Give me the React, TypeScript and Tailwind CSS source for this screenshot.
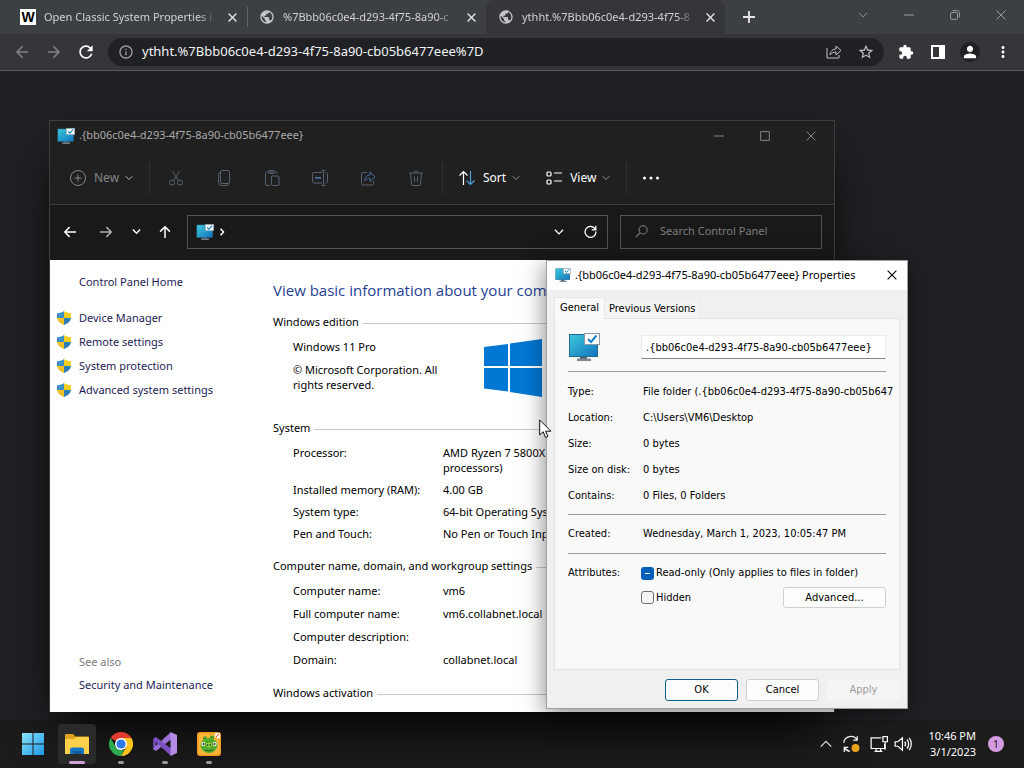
import type { ReactNode } from 'react'
import {
  MdArrowBack,
  MdArrowForward,
  MdExtension,
  MdInfoOutline,
  MdMoreVert,
  MdPerson,
  MdPublic,
  MdRefresh,
  MdStarBorder,
} from 'react-icons/md'

const folderName = '.{bb06c0e4-d293-4f75-8a90-cb05b6477eee}'

const tabs = [
  { title: 'Open Classic System Properties i', favicon: 'w', active: false },
  { title: '%7Bbb06c0e4-d293-4f75-8a90-c', favicon: 'globe', active: false },
  { title: 'ythht.%7Bbb06c0e4-d293-4f75-8', favicon: 'globe', active: true },
]

const sideLinks = ['Device Manager', 'Remote settings', 'System protection', 'Advanced system settings']

const systemRows = [
  { label: 'Processor:', value: <>AMD Ryzen 7 5800X<br />processors)</> },
  { label: 'Installed memory (RAM):', value: '4.00 GB' },
  { label: 'System type:', value: '64-bit Operating System' },
  { label: 'Pen and Touch:', value: 'No Pen or Touch Input' },
]

const nameRows = [
  { label: 'Computer name:', value: 'vm6' },
  { label: 'Full computer name:', value: 'vm6.collabnet.local' },
  { label: 'Computer description:', value: '' },
  { label: 'Domain:', value: 'collabnet.local' },
]

const propertyRows = [
  { label: 'Type:', value: 'File folder (.{bb06c0e4-d293-4f75-8a90-cb05b647' },
  { label: 'Location:', value: 'C:\\Users\\VM6\\Desktop' },
  { label: 'Size:', value: '0 bytes' },
  { label: 'Size on disk:', value: '0 bytes' },
  { label: 'Contains:', value: '0 Files, 0 Folders' },
]

function Stroke({ size = 16, width = 1, className = '', children }: { size?: number; width?: number; className?: string; children: ReactNode }) {
  return (
    <svg width={size} height={size} viewBox="0 0 16 16" fill="none" stroke="currentColor" strokeWidth={width} className={`shrink-0 ${className}`} aria-hidden="true">
      {children}
    </svg>
  )
}

function Chevron({ size = 8, width = 2, className = '' }: { size?: number; width?: number; className?: string }) {
  return (
    <Stroke size={size} width={width} className={className}>
      <path d="M1.5 4.5 8 11l6.5-6.5" />
    </Stroke>
  )
}

function Cross({ size = 10, width = 1.5 }: { size?: number; width?: number }) {
  return (
    <Stroke size={size} width={width}>
      <path d="m1 1 14 14M15 1 1 15" />
    </Stroke>
  )
}

function MonitorIcon({ size }: { size: number }) {
  return (
    <svg width={size} height={size} viewBox="0 0 32 32" className="shrink-0" aria-hidden="true">
      <defs>
        <linearGradient id="screen" x1="0" y1="0" x2="1" y2="1">
          <stop offset="0" stopColor="#3ccbdc" />
          <stop offset="1" stopColor="#1172bd" />
        </linearGradient>
      </defs>
      <path d="M12 25h7v3h-7z" fill="#55616b" />
      <path d="M9 27.5h14V30H9z" fill="#7b8790" />
      <rect x="1.5" y="3.5" width="28" height="22" fill="url(#screen)" stroke="#246a8e" />
      <rect x="16.5" y="2.5" width="15" height="11" fill="#fff" stroke="#8b9aa5" />
      <path d="m20 8 3 3 5.500-6.500" fill="none" stroke="#1481c9" strokeWidth="2" />
    </svg>
  )
}

function ShieldIcon() {
  return (
    <svg width="14" height="14" viewBox="0 0 16 16" className="shrink-0" aria-hidden="true">
      <path d="M8 0C6 1.600 3.500 2.300 0 2.300V8h8z" fill="#3a93c4" />
      <path d="M8 0c2 1.600 4.500 2.300 8 2.300V8H8z" fill="#f3cf1e" />
      <path d="M0 8c.4 3.800 3.500 6.500 8 8V8z" fill="#efc02a" />
      <path d="M16 8c-.4 3.800-3.500 6.500-8 8V8z" fill="#2f7fb5" />
    </svg>
  )
}

function TabItem({ title, favicon, active, divided }: { title: string; favicon: string; active: boolean; divided: boolean }) {
  return (
    <div className={`flex h-[34px] w-[239px] min-w-0 items-center rounded-t-lg ${active ? 'bg-[#35363a]' : 'bg-[#3c4043]'}`}>
      <span className={`h-5 w-px ${divided ? 'bg-[#606468]' : ''}`} />
      <div className="flex min-w-0 flex-1 items-center gap-2 pr-[7px] pl-[11px]">
        {favicon === 'w' ? (
          <span className="flex size-4 shrink-0 items-center justify-center bg-white font-[Liberation_Sans] text-sm font-bold text-black">W</span>
        ) : (
          <MdPublic className="size-4 shrink-0 text-[#c3c6c9]" />
        )}
        <span className="min-w-0 flex-1 overflow-hidden mask-r-from-90% text-[11px] whitespace-nowrap text-[#d0d2d5]">{title}</span>
        <button type="button" aria-label="Close tab" className="flex size-4 shrink-0 items-center justify-center text-[#e0e2e5]">
          <Cross size={9} width={2.5} />
        </button>
      </div>
    </div>
  )
}

function BrowserChrome() {
  return (
    <header className="border-b border-[#5a5b5e] bg-[#35363a] text-[#9aa0a6]">
      <div className="flex h-[34px] items-center bg-[#3c4043]">
        <div className="flex min-w-0 items-center pl-2">
          {tabs.map((tab, i) => (
            <TabItem key={tab.title} {...tab} divided={i === 1} />
          ))}
        </div>
        <button type="button" aria-label="New tab" className="ml-4 flex size-4 items-center justify-center text-[#e3e5e8]">
          <Stroke size={12} width={2.5}><path d="M8 0v16M0 8h16" /></Stroke>
        </button>
        <div className="ml-auto flex items-center gap-9 pr-[18px] pb-1">
          <button type="button" aria-label="Search tabs"><Chevron size={10} width={1.5} /></button>
          <button type="button" aria-label="Minimize"><Stroke size={10} width={1.5}><path d="M0 8h16" /></Stroke></button>
          <button type="button" aria-label="Restore">
            <Stroke size={10} width={1.5}>
              <rect x="1" y="4" width="11" height="11" rx="2" />
              <path d="M4 1h8a3 3 0 0 1 3 3v8" />
            </Stroke>
          </button>
          <button type="button" aria-label="Close"><Cross size={10} width={1.5} /></button>
        </div>
      </div>
      <div className="flex h-9 items-center gap-4 pr-3 pl-3.5">
        <button type="button" aria-label="Back"><MdArrowBack className="size-4 scale-115 text-[#7d8186]" /></button>
        <button type="button" aria-label="Forward"><MdArrowForward className="size-4 scale-115 text-[#7d8186]" /></button>
        <button type="button" aria-label="Reload"><MdRefresh className="-ml-0.5 size-5 text-white" /></button>
        <div className="-ml-1 flex h-7 flex-1 items-center gap-2 rounded-full bg-[#202124] pr-2.5 pl-2.5">
          <MdInfoOutline className="size-4 shrink-0 text-[#9aa0a6]" />
          <input aria-label="Address" defaultValue="ythht.%7Bbb06c0e4-d293-4f75-8a90-cb05b6477eee%7D" className="min-w-0 flex-1 bg-transparent text-[13px] text-[#f1f3f4] outline-none" />
          <button type="button" aria-label="Share" className="mr-2 text-[#bdc1c6]">
            <Stroke>
              <path d="M1 4v10h12v-3" />
              <path d="M4 11c.5-4 3-6 6-6V2l5 4.500-5 4.500V8C7.500 8 5.500 9 4 11z" />
            </Stroke>
          </button>
          <button type="button" aria-label="Bookmark" className="text-[#bdc1c6]"><MdStarBorder className="size-4 scale-110" /></button>
        </div>
        <button type="button" aria-label="Extensions" className="-ml-0.5"><MdExtension className="size-4 text-white" /></button>
        <button type="button" aria-label="Side panel">
          <svg width="16" height="16" viewBox="0 0 16 16" aria-hidden="true">
            <path d="M1 1h14v14H1zM3 3v10h6V3z" fill="#fff" fillRule="evenodd" />
          </svg>
        </button>
        <button type="button" aria-label="Profile" className="-mx-0.5 flex size-5 items-center justify-center rounded-full bg-[#202124]">
          <MdPerson className="size-4 scale-115 text-white" />
        </button>
        <button type="button" aria-label="Menu"><MdMoreVert className="size-[18px] text-white" /></button>
      </div>
    </header>
  )
}

const disabledTools: { name: string; icon: ReactNode }[] = [
  { name: 'Cut', icon: <><path d="m4.500 1 6 10M11.500 1l-6 10" /><circle cx="4" cy="12.500" r="2.500" /><circle cx="12" cy="12.500" r="2.500" /></> },
  { name: 'Copy', icon: <><rect x="4.500" y=".5" width="9" height="13" rx="1.500" /><path d="M4.500 2.500a2 2 0 0 0-2 2v8a3 3 0 0 0 3 3h5a2 2 0 0 0 2-2" /></> },
  { name: 'Paste', icon: <><path d="M6 15.500H3a1.500 1.500 0 0 1-1.500-1.500V3.500A1.500 1.500 0 0 1 3 2h9a1.500 1.500 0 0 1 1.500 1.500" /><rect x="4.500" y=".5" width="6" height="3" rx="1" /><rect x="7.500" y="6" width="7.500" height="9.500" rx="1" /></> },
  { name: 'Rename', icon: <><path d="M10 2.500H2A1.500 1.500 0 0 0 .5 4v7.500A1.500 1.500 0 0 0 2 13h8M13.500 2.500A1.500 1.500 0 0 1 15.500 4v7.500a1.500 1.500 0 0 1-2 1.500M11.500.5v15M9.500.5h4M9.500 15.500h4" /><path d="M3 7.800h6" stroke="#4a7fb5" strokeWidth="1.500" /></> },
  { name: 'Share', icon: <><path d="M7 2.500H3A1.500 1.500 0 0 0 1.500 4v9.500A1.500 1.500 0 0 0 3 15h9a1.500 1.500 0 0 0 1.500-1.500V11" /><path d="M4.500 11C5 7 7 5 10 5V2l5 5-5 4.500V8.500c-2.500 0-4 .5-5.500 2.500z" stroke="#456a94" /></> },
  { name: 'Delete', icon: <path d="M1 3h14M6 3a2 2 0 0 1 4 0M2.500 3l1 11a1.500 1.500 0 0 0 1.500 1.500h6a1.500 1.500 0 0 0 1.500-1.500l1-11M6.500 6.500v5.500M9.500 6.500v5.500" /> },
]

function GroupTitle({ children }: { children: ReactNode }) {
  return (
    <div className="flex items-center gap-1">
      <h2 className="whitespace-nowrap">{children}</h2>
      <span className="mt-1 h-px flex-1 bg-[#c8c8c8]" />
    </div>
  )
}

function InfoRows({ rows }: { rows: { label: string; value: ReactNode }[] }) {
  return (
    <>
      {rows.map((row) => (
        <div key={row.label} className="flex pl-5">
          <dt className="w-[150px] shrink-0">{row.label}</dt>
          <dd className="whitespace-nowrap">{row.value}</dd>
        </div>
      ))}
    </>
  )
}

function ExplorerWindow() {
  return (
    <section className="absolute top-[49px] left-[49px] flex w-[786px] flex-col border border-[#3d3d3d] bg-[#202020] text-[11px] text-white shadow-2xl shadow-black">
      <div className="flex h-7 items-center pt-px pr-[18px] pl-[7px] text-[#a9a9a9]">
        <MonitorIcon size={18} />
        <span className="ml-1">{folderName}</span>
        <div className="ml-auto flex items-center gap-9 text-[#8f8f8f]">
          <button type="button" aria-label="Minimize"><Stroke size={10} width={1.5}><path d="M0 8h16" /></Stroke></button>
          <button type="button" aria-label="Maximize"><Stroke size={10} width={1.5}><path d="M1 1h14v14H1z" /></Stroke></button>
          <button type="button" aria-label="Close"><Cross size={10} width={1.5} /></button>
        </div>
      </div>

      <div className="flex h-14 items-center border-b border-[#3d3d3d] pt-[3px] pl-5 text-xs">
        <button type="button" className="flex w-[79px] items-center text-[#858585]">
          <Stroke><circle cx="8" cy="8" r="7.500" /><path d="M8 4.500v7M4.500 8h7" /></Stroke>
          <span className="mr-1.5 ml-2">New</span>
          <Chevron className="text-[#b5b5b5]" />
        </button>
        <span className="h-8 w-px bg-[#333]" />
        <div className="flex gap-8 px-[18px] text-[#566270]">
          {disabledTools.map((tool) => (
            <button key={tool.name} type="button" disabled aria-label={tool.name}><Stroke>{tool.icon}</Stroke></button>
          ))}
        </div>
        <span className="h-8 w-px bg-[#333]" />
        <button type="button" className="ml-4 flex items-center">
          <Stroke width={1.2}>
            <path d="M4.500 15V1.500M.5 5.500l4-4 4 4" />
            <path d="M11.500 1v13.500M7.500 10.500l4 4 4-4" stroke="#4ba0dc" />
          </Stroke>
          <span className="mr-1.5 ml-2">Sort</span>
          <Chevron width={1.5} className="text-[#b5b5b5]" />
        </button>
        <button type="button" className="ml-[26px] flex items-center">
          <Stroke width={1.2}><rect x="1" y="2" width="4" height="4" rx="1" /><rect x="1" y="10" width="4" height="4" rx="1" /><path d="M8 3h8M8 11h8" /></Stroke>
          <span className="mr-1.5 ml-2">View</span>
          <Chevron width={1.5} className="text-[#b5b5b5]" />
        </button>
        <span className="ml-4 h-8 w-px bg-[#333]" />
        <button type="button" aria-label="More" className="ml-4">
          <svg width="16" height="16" viewBox="0 0 16 16" fill="#fff" aria-hidden="true"><circle cx="1.500" cy="8" r="1.500" /><circle cx="8" cy="8" r="1.500" /><circle cx="14.500" cy="8" r="1.500" /></svg>
        </button>
      </div>

      <div className="flex h-[55px] items-center bg-[#191919] pr-3 pb-0.5 pl-3.5">
        <button type="button" aria-label="Back"><Stroke size={12} width={2}><path d="M16 8H1M7.500 1.500 1 8l6.500 6.500" /></Stroke></button>
        <button type="button" aria-label="Forward" className="ml-6 text-[#b0b0b0]"><Stroke size={12} width={2}><path d="M0 8h15M8.500 1.500 15 8l-6.500 6.500" /></Stroke></button>
        <button type="button" aria-label="Recent locations" className="ml-5"><Chevron size={9} width={2.5} /></button>
        <button type="button" aria-label="Up" className="ml-[18px]"><Stroke size={12} width={2}><path d="M8 16V1M1.500 7.500 8 1l6.500 6.500" /></Stroke></button>
        <div className="ml-4 flex h-[34px] flex-1 items-center border border-[#535353] px-2">
          <MonitorIcon size={18} />
          <Stroke size={8} width={3} className="ml-1"><path d="m5 1.500 6 6.500-6 6.500" /></Stroke>
          <button type="button" aria-label="Previous locations" className="ml-auto"><Chevron size={10} width={2} /></button>
          <button type="button" aria-label="Refresh" className="mr-0.5 ml-5">
            <Stroke size={13} width={1.6}><path d="M14 5.500A6.700 6.700 0 1 0 14.700 8M14.500 1v5h-5" /></Stroke>
          </button>
        </div>
        <label className="ml-3 flex h-[34px] w-[202px] items-center gap-3 border border-[#535353] px-3.5 text-[#7d7d7d]">
          <Stroke size={13} width={1.3}><circle cx="10" cy="6" r="5" /><path d="M6.500 9.500 1 15" /></Stroke>
          <input aria-label="Search" placeholder="Search Control Panel" className="w-full bg-transparent outline-none placeholder:text-[#7d7d7d]" />
        </label>
      </div>

      <div className="-mb-px flex h-[452px] overflow-hidden bg-white leading-[15px] text-black">
        <nav className="flex w-[223px] shrink-0 flex-col pt-3.5 pb-5 pl-[7px] text-[#1d1d55]">
          <a href="#home" className="pl-[22px]">Control Panel Home</a>
          <ul className="mt-[21px] flex flex-col gap-[9px]">
            {sideLinks.map((link) => (
              <li key={link}>
                <a href="#settings" className="flex items-center gap-2"><ShieldIcon />{link}</a>
              </li>
            ))}
          </ul>
          <div className="mt-auto pl-[22px]">
            <p className="text-[#7b7b7b]">See also</p>
            <a href="#security" className="mt-2 block">Security and Maintenance</a>
          </div>
        </nav>
        <main className="min-w-0 flex-1 pt-5">
          <h1 className="font-['Open_Sans',sans-serif] text-[15px] leading-5 text-[#1f3f94]">View basic information about your computer</h1>
          <div className="mt-3.5"><GroupTitle>Windows edition</GroupTitle></div>
          <div className="mt-2.5 flex pl-5">
            <div className="w-[191px]">
              <p>Windows 11 Pro</p>
              <p className="mt-2 max-w-[165px]">© Microsoft Corporation. All rights reserved.</p>
            </div>
            <svg width="58" height="58" viewBox="0 0 58 58" fill="#0078d4" aria-label="Windows">
              <path d="M0 8 24 5v22H0zM26 4.500 58 0v27H26zM0 29h24v23.500L0 49.500zM26 29h32v29l-32-5z" />
            </svg>
          </div>
          <div className="mt-[23px]"><GroupTitle>System</GroupTitle></div>
          <dl className="mt-2.5 flex flex-col gap-[7px]"><InfoRows rows={systemRows} /></dl>
          <div className="mt-[17px]"><GroupTitle>Computer name, domain, and workgroup settings</GroupTitle></div>
          <dl className="mt-2.5 flex flex-col gap-2"><InfoRows rows={nameRows} /></dl>
          <div className="mt-[18px]"><GroupTitle>Windows activation</GroupTitle></div>
        </main>
      </div>
    </section>
  )
}

function PropertiesDialog() {
  return (
    <section role="dialog" aria-label="Properties" className="absolute top-[189px] left-[546px] w-[362px] border border-[#a0a0a0] bg-[#f0f0f0] text-[11px] leading-4 text-black shadow-[0_4px_22px_rgba(0,0,0,0.5)]">
      <div className="flex h-[29px] items-center bg-white pr-2.5 pb-px pl-2">
        <MonitorIcon size={16} />
        <h2 className="ml-1 whitespace-nowrap">{folderName} Properties</h2>
        <button type="button" aria-label="Close" className="ml-auto"><Cross size={10} width={1.7} /></button>
      </div>

      <div className="px-[7px] pt-[7px] pb-[7px] font-['DejaVu_Sans_Condensed',Tahoma,sans-serif]">
        <div role="tablist" className="flex items-end">
          <button type="button" role="tab" aria-selected="true" className="relative z-10 -mb-px h-[22px] border border-b-0 border-[#e6e6e6] bg-[#f9f9f9] px-[5px] pb-0.5">General</button>
          <button type="button" role="tab" aria-selected="false" className="h-[19px] border border-b-0 border-l-0 border-[#ececec] bg-[#f3f3f3] px-1">Previous Versions</button>
        </div>
        <div className="flex h-[352px] flex-col border border-[#e2e2e2] bg-[#f9f9f9] px-[13px] pt-3">
          <div className="flex items-center">
            <MonitorIcon size={32} />
            <input aria-label="Name" defaultValue={folderName} className="ml-auto h-6 w-[245px] border border-[#ececec] border-b-[#868686] bg-white px-1" />
          </div>
          <hr className="mt-2 border-[#9c9c9c]" />
          <dl className="mt-3 flex flex-col gap-2.5">
            {propertyRows.map((row) => (
              <div key={row.label} className="flex">
                <dt className="w-[75px] shrink-0">{row.label}</dt>
                <dd className="whitespace-nowrap">{row.value}</dd>
              </div>
            ))}
          </dl>
          <hr className="mt-2.5 border-[#9c9c9c]" />
          <dl className="mt-[11px] flex">
            <dt className="w-[75px] shrink-0">Created:</dt>
            <dd className="whitespace-nowrap">Wednesday, March 1, 2023, 10:05:47 PM</dd>
          </dl>
          <hr className="mt-[11px] border-[#9c9c9c]" />
          <div className="mt-[11px] flex">
            <span className="w-[73px] shrink-0">Attributes:</span>
            <div className="flex-1">
              <label className="flex items-center gap-0.5 whitespace-nowrap">
                <span className="relative flex size-[13px]">
                  <input
                    type="checkbox"
                    ref={(el) => {
                      if (el) el.indeterminate = true
                    }}
                    className="size-[13px] appearance-none rounded-[3px] bg-[#005fb8]"
                  />
                  <span className="pointer-events-none absolute top-1.5 left-1 h-px w-[5px] bg-white" />
                </span>
                Read-only (Only applies to files in folder)
              </label>
              <div className="mt-1.5 flex items-center justify-between">
                <label className="flex items-center gap-0.5">
                  <input type="checkbox" className="size-[13px] appearance-none rounded-[3px] border border-[#6f6f6f] bg-[#f5f5f5]" />
                  Hidden
                </label>
                <button type="button" className="h-[21px] w-[103px] rounded-[3px] border border-[#d0d0d0] bg-[#fdfdfd]">Advanced...</button>
              </div>
            </div>
          </div>
        </div>
        <div className="mt-[9px] flex justify-end gap-2">
          <button type="button" className="h-[22px] w-[73px] rounded-[3px] border border-[#0f5f91] bg-[#fdfdfd]">OK</button>
          <button type="button" className="h-[22px] w-[73px] rounded-[3px] border border-[#d0d0d0] bg-[#fdfdfd]">Cancel</button>
          <button type="button" disabled className="h-[22px] w-[73px] rounded-[3px] border border-[#f4f4f4] bg-[#f5f5f5] text-[#9b9b9b]">Apply</button>
        </div>
      </div>
    </section>
  )
}

function TaskButton({ name, running, active, children }: { name: string; running?: boolean; active?: boolean; children: ReactNode }) {
  return (
    <button type="button" aria-label={name} className={`relative flex h-10 w-[38px] items-center justify-center rounded ${active ? 'bg-[#2a2a2a]' : ''}`}>
      {children}
      {running && <span className={`absolute bottom-0 h-[3px] rounded-full ${active ? 'w-4 bg-[#d0a3d8]' : 'w-1.5 bg-[#9a9a9a]'}`} />}
    </button>
  )
}

function Taskbar() {
  return (
    <footer className="flex h-12 items-center justify-between bg-[#1c1c1c] pr-5 pl-3.5 text-white">
      <div className="flex gap-1.5">
        <TaskButton name="Start">
          <svg width="24" height="24" viewBox="0 0 24 24" aria-hidden="true">
            <defs>
              <linearGradient id="start" x1="0" y1="0" x2="1" y2="1"><stop stopColor="#8be3fb" /><stop offset="1" stopColor="#1b97e5" /></linearGradient>
            </defs>
            <path d="M1 1h10.500v10.500H1zM12.500 1H23v10.500H12.500zM1 12.500h10.500V23H1zM12.500 12.500H23V23H12.500z" fill="url(#start)" />
          </svg>
        </TaskButton>
        <TaskButton name="File Explorer" running active>
          <svg width="26" height="24" viewBox="0 0 26 24" aria-hidden="true">
            <path d="M1 3a1 1 0 0 1 1-1h7l2.500 2.500H24a1 1 0 0 1 1 1V10H1z" fill="#dfa21c" />
            <path d="M1 7h9l2-2h12a1 1 0 0 1 1 1v16H1z" fill="#fbd04b" />
            <path d="M6 22v-4a2.500 2.500 0 0 1 2.500-2.500h9A2.500 2.500 0 0 1 20 18v4z" fill="#1976c5" />
            <path d="M9 19h8v3H9z" fill="#115b9c" />
          </svg>
        </TaskButton>
        <TaskButton name="Chrome" running>
          <svg width="24" height="24" viewBox="0 0 24 24" aria-hidden="true">
            <path d="M12 12 1.600 6A12 12 0 0 1 22.400 6z" fill="#e33b2e" />
            <path d="M12 6h10.400A12 12 0 0 1 12 24l5.200-9z" fill="#fcc31e" />
            <path d="M1.600 6 6.800 15 12 18l3 .2L12 24A12 12 0 0 1 1.600 6z" fill="#2da94f" />
            <circle cx="12" cy="12" r="6" fill="#fff" />
            <circle cx="12" cy="12" r="4.600" fill="#2f78e8" />
          </svg>
        </TaskButton>
        <TaskButton name="Visual Studio" running>
          <svg width="24" height="24" viewBox="0 0 24 24" aria-hidden="true">
            <path d="M0 7v10l3 2V5z" fill="#6b45a8" />
            <path d="m0 17 3 2L18 7.500V0L2 14.500z" fill="#9a70d6" />
            <path d="m0 7 3-2 15 11.500V24L2 9.500z" fill="#7a4fc0" />
            <path d="M17.500 0 24 3v18l-6.500 3z" fill="#b58be6" />
          </svg>
        </TaskButton>
        <TaskButton name="Bad Piggies" running>
          <svg width="24" height="24" viewBox="0 0 24 24" aria-hidden="true">
            <rect width="24" height="24" rx="3" fill="#f29a1f" />
            <rect x="1.500" y="1.500" width="21" height="21" rx="2" fill="#f9b63a" />
            <circle cx="8" cy="6.500" r="2" fill="#459b28" />
            <circle cx="15" cy="5.500" r="2" fill="#459b28" />
            <ellipse cx="12" cy="13.500" rx="8.500" ry="7.500" fill="#55ad2e" />
            <circle cx="6.300" cy="12" r="2" fill="#fff" />
            <circle cx="17.700" cy="12" r="2" fill="#fff" />
            <circle cx="6.500" cy="12" r="1" fill="#222" />
            <circle cx="17.500" cy="12" r="1" fill="#222" />
            <ellipse cx="12" cy="13" rx="4" ry="3" fill="#95d648" stroke="#2f7a1c" strokeWidth=".6" />
            <circle cx="10.500" cy="13" r="1" fill="#275d18" />
            <circle cx="13.500" cy="13" r="1" fill="#275d18" />
            <path d="M8 18q4 2 8 0" stroke="#275d18" fill="none" />
            <path d="M18 1h5v6l-5-2z" fill="#fff1df" />
            <path d="m19 5 3-3" stroke="#db4b32" />
          </svg>
        </TaskButton>
      </div>
      <div className="flex items-center">
        <button type="button" aria-label="Show hidden icons"><Stroke size={12} width={1.6}><path d="m1 11.500 7-7 7 7" /></Stroke></button>
        <button type="button" aria-label="Updates" className="ml-2.5">
          <Stroke size={18} width={1.1}>
            <path d="M1.500 7a6.500 6.500 0 0 1 12-2.500M13.500 1v3.500H10M7 14.500A6.500 6.500 0 0 1 2 11M2 15v-4h3.500" />
            <circle cx="12" cy="11.500" r="3.500" fill="#eda51a" stroke="none" />
          </Stroke>
        </button>
        <button type="button" aria-label="Network" className="ml-2.5">
          <Stroke size={18} width={1.1}><path d="M10 2.500H1v9.500h12V8M4 14.500h7M5.500 12v2.500M9.500 12v2.500M11.500 1.500h4V6h-4zM13.500 6v7" /></Stroke>
        </button>
        <button type="button" aria-label="Volume" className="ml-1.5">
          <Stroke size={18} width={1.1}><path d="M1 6v4h2.500L7.500 13.500v-11L3.500 6zM9.500 6a3 3 0 0 1 0 4M11.500 4a6 6 0 0 1 0 8M13.500 2.500a9 9 0 0 1 0 11" /></Stroke>
        </button>
        <div className="ml-4 text-right text-[11px] leading-4">
          <div>10:46 PM</div>
          <div>3/1/2023</div>
        </div>
        <span className="ml-3 flex size-4 items-center justify-center rounded-full bg-[#d59be0] text-[11px] text-[#2d1633]">1</span>
      </div>
    </footer>
  )
}

export default function App() {
  return (
    <div className="flex min-h-screen flex-col bg-[#202124] font-['Noto_Sans','Open_Sans',sans-serif]">
      <BrowserChrome />
      <div className="relative flex-1">
        <ExplorerWindow />
        <PropertiesDialog />
        <svg width="13" height="20" viewBox="0 0 13 20" className="absolute top-[348px] left-[539px]" aria-hidden="true">
          <path d="M.7 1v15l3.500-3.300L6.500 18.500l2.400-1-2.300-5.300H12z" fill="#fff" stroke="#111" />
        </svg>
      </div>
      <Taskbar />
    </div>
  )
}
